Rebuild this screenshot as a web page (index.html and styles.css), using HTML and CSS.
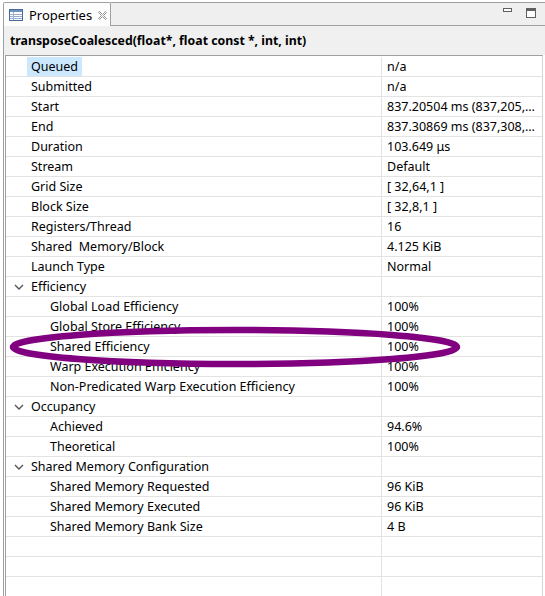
FILE: index.html
```html
<!DOCTYPE html>
<html>
<head>
<meta charset="utf-8">
<link rel="stylesheet" href="styles.css">
</head>
<body>
<div class="tabbar">
  <div class="tab">
    <svg class="tab-icon" width="14" height="12" viewBox="0 0 14 12">
      <rect x="0.5" y="0.5" width="13" height="11" fill="#fff" stroke="#4a6a9a"/>
      <rect x="1" y="1" width="12" height="2" fill="#6f8fbf"/>
      <line x1="1" y1="5.5" x2="13" y2="5.5" stroke="#9ab0d0"/>
      <line x1="1" y1="7.5" x2="13" y2="7.5" stroke="#9ab0d0"/>
      <line x1="1" y1="9.5" x2="13" y2="9.5" stroke="#9ab0d0"/>
      <line x1="4.5" y1="3" x2="4.5" y2="11" stroke="#9ab0d0"/>
    </svg>
    <span class="tab-label">Properties</span>
    <svg class="tab-close" width="9" height="9" viewBox="0 0 9 9">
      <path d="M0.5 1.5 L1.5 0.5 L4.5 3.5 L7.5 0.5 L8.5 1.5 L5.5 4.5 L8.5 7.5 L7.5 8.5 L4.5 5.5 L1.5 8.5 L0.5 7.5 L3.5 4.5 Z" fill="none" stroke="#888" stroke-width="0.9"/>
    </svg>
  </div>
  <div class="tab-fill">
    <svg class="win-btn" width="10" height="5" viewBox="0 0 10 5">
      <rect x="0.5" y="0.5" width="8" height="3" fill="#fff" stroke="#606060"/>
    </svg>
    <svg class="win-btn" width="11" height="11" viewBox="0 0 11 11">
      <rect x="0.5" y="0.5" width="9" height="9" fill="#fff" stroke="#606060"/>
      <rect x="1" y="1" width="8" height="2" fill="#606060"/>
    </svg>
  </div>
</div>
<div class="panel">
  <div class="title">transposeCoalesced(float*, float const *, int, int)</div>
  <div class="table">
    <div class="row"><div class="key l1"><span class="sel">Queued</span></div><div class="val">n/a</div></div>
    <div class="row"><div class="key l1">Submitted</div><div class="val">n/a</div></div>
    <div class="row"><div class="key l1">Start</div><div class="val">837.20504 ms (837,205,040 ns)</div></div>
    <div class="row"><div class="key l1">End</div><div class="val">837.30869 ms (837,308,690 ns)</div></div>
    <div class="row"><div class="key l1">Duration</div><div class="val">103.649 μs</div></div>
    <div class="row"><div class="key l1">Stream</div><div class="val">Default</div></div>
    <div class="row"><div class="key l1">Grid Size</div><div class="val">[ 32,64,1 ]</div></div>
    <div class="row"><div class="key l1">Block Size</div><div class="val">[ 32,8,1 ]</div></div>
    <div class="row"><div class="key l1">Registers/Thread</div><div class="val">16</div></div>
    <div class="row"><div class="key l1">Shared&nbsp; Memory/Block</div><div class="val">4.125 KiB</div></div>
    <div class="row"><div class="key l1">Launch Type</div><div class="val">Normal</div></div>
    <div class="row"><div class="key grp"><svg class="chev" width="10" height="6" viewBox="0 0 10 6"><polyline points="1,1 5,5 9,1" fill="none" stroke="#555" stroke-width="1.4"/></svg>Efficiency</div><div class="val"></div></div>
    <div class="row"><div class="key l2">Global Load Efficiency</div><div class="val">100%</div></div>
    <div class="row"><div class="key l2">Global Store Efficiency</div><div class="val">100%</div></div>
    <div class="row"><div class="key l2">Shared Efficiency</div><div class="val">100%</div></div>
    <div class="row"><div class="key l2">Warp Execution Efficiency</div><div class="val">100%</div></div>
    <div class="row"><div class="key l2">Non-Predicated Warp Execution Efficiency</div><div class="val">100%</div></div>
    <div class="row"><div class="key grp"><svg class="chev" width="10" height="6" viewBox="0 0 10 6"><polyline points="1,1 5,5 9,1" fill="none" stroke="#555" stroke-width="1.4"/></svg>Occupancy</div><div class="val"></div></div>
    <div class="row"><div class="key l2">Achieved</div><div class="val">94.6%</div></div>
    <div class="row"><div class="key l2">Theoretical</div><div class="val">100%</div></div>
    <div class="row"><div class="key grp"><svg class="chev" width="10" height="6" viewBox="0 0 10 6"><polyline points="1,1 5,5 9,1" fill="none" stroke="#555" stroke-width="1.4"/></svg>Shared Memory Configuration</div><div class="val"></div></div>
    <div class="row"><div class="key l2">Shared Memory Requested</div><div class="val">96 KiB</div></div>
    <div class="row"><div class="key l2">Shared Memory Executed</div><div class="val">96 KiB</div></div>
    <div class="row"><div class="key l2">Shared Memory Bank Size</div><div class="val">4 B</div></div>
    <div class="row"><div class="key"></div><div class="val"></div></div>
    <div class="row"><div class="key"></div><div class="val"></div></div>
    <div class="row"><div class="key"></div><div class="val"></div></div>
  </div>
</div>
<svg class="annotation" width="545" height="596" viewBox="0 0 545 596">
  <ellipse cx="235" cy="347" rx="222" ry="17" fill="none" stroke="#800080" stroke-width="6.5"/>
</svg>
</body>
</html>
```
FILE: styles.css
```css
html, body {
  margin: 0;
  padding: 0;
  background: #ffffff;
  overflow: hidden;
}
body {
  width: 545px;
  height: 596px;
  position: relative;
  font-family: "Noto Sans", "Noto Sans CJK SC", sans-serif;
  font-size: 12.5px;
  color: #000;
}
.tabbar {
  display: flex;
  margin-top: 2px;
  height: 24px;
}
.tab {
  display: flex;
  align-items: center;
  box-sizing: border-box;
  width: 108px;
  margin-left: 3px;
  height: 24px;
  padding-left: 5px;
  background: #fdfdfd;
  border: 1px solid #a0a0a0;
  border-bottom: none;
  border-radius: 2px 2px 0 0;
}
.tab-icon {
  display: block;
  margin-top: 1px;
}
.tab-label {
  margin-left: 6px;
  font-size: 13px;
  line-height: 20px;
}
.tab-close {
  margin-left: 6px;
  margin-top: 2px;
}
.tab-fill {
  flex: 1;
  display: flex;
  justify-content: flex-end;
  align-items: flex-start;
  box-sizing: border-box;
  height: 24px;
  background: #efefef;
  border-top: 1px solid #a0a0a0;
  border-bottom: 1px solid #a0a0a0;
  padding-right: 8px;
  gap: 13px;
}
.win-btn {
  display: block;
  margin-top: 5px;
}
.panel {
  margin-left: 3px;
  border-left: 1px solid #a0a0a0;
  height: 570px;
}
.title {
  height: 29px;
  box-sizing: border-box;
  background: #f0f0f0;
  padding-left: 6px;
  font-weight: bold;
  font-size: 12.3px;
  line-height: 29px;
  white-space: nowrap;
}
.table {
  margin-left: 1px;
  margin-right: 2px;
  border-top: 1px solid #a0a0a0;
  border-left: 1px solid #a0a0a0;
  border-right: 1px solid #d5d5d5;
  padding-top: 1px;
  height: 540px;
  overflow: hidden;
}
.row {
  display: flex;
  height: 20px;
  box-sizing: border-box;
  border-bottom: 1px solid #e3e3e3;
  line-height: 19px;
  white-space: nowrap;
}
.key {
  box-sizing: border-box;
  width: 376px;
  flex: none;
  border-right: 1px solid #e3e3e3;
  display: flex;
  align-items: center;
  overflow: hidden;
}
.key.l1 { padding-left: 25px; }
.key.l2 { padding-left: 44px; }
.key.grp { padding-left: 8px; }
.chev {
  display: block;
  margin-right: 7px;
}
.sel {
  background: #cce8ff;
  margin-left: -4px;
  padding: 0 4px;
  line-height: 19px;
}
.val {
  flex: 1;
  min-width: 0;
  padding-left: 5px;
  padding-right: 2px;
  overflow: hidden;
  text-overflow: ellipsis;
}
.annotation {
  position: absolute;
  left: 0;
  top: 0;
  pointer-events: none;
}
```
